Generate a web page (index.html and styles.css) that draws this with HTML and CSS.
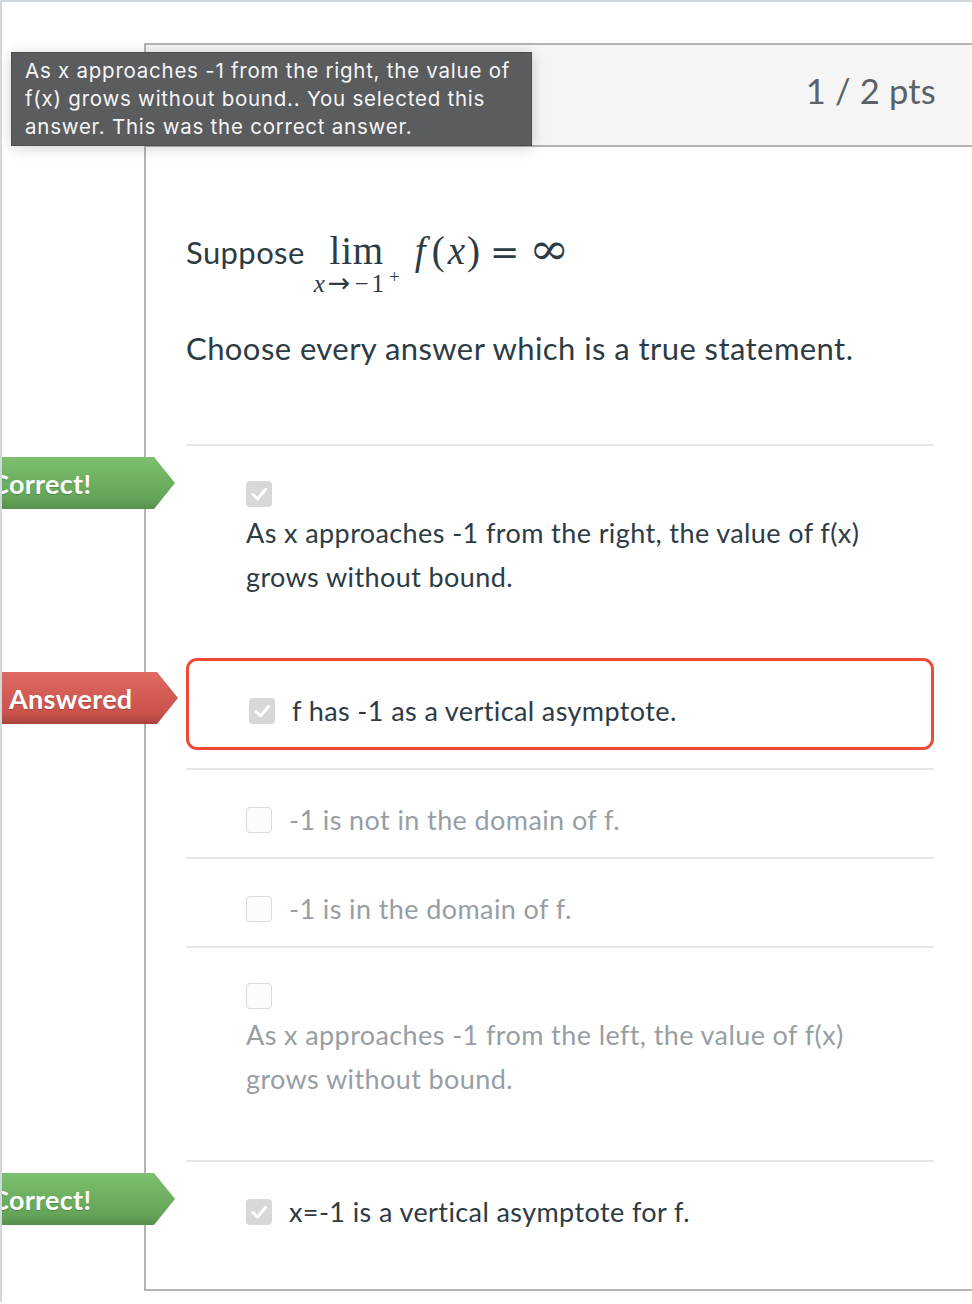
FILE: index.html
```html
<!DOCTYPE html>
<html>
<head>
<meta charset="utf-8">
<link rel="stylesheet" href="styles.css">
</head>
<body>
<div class="page">
  <div class="card">
    <div class="card-header">
      <span class="pts">1 / 2 pts</span>
    </div>
    <div class="card-body">
      <div class="q-math">
        <span class="q-word">Suppose</span>
        <span class="lim-col">
          <span class="lim">lim</span>
          <span class="lim-sub"><i>x</i><span class="arr">→</span><span class="neg">−</span><span class="one">1</span><sup>+</sup></span>
        </span>
        <span class="mexpr"><i class="mf">f</i><span class="par">(</span><i class="mx">x</i><span class="par">)</span><span class="eq">=</span><span class="inf">∞</span></span>
      </div>
      <p class="q-text">Choose every answer which is a true statement.</p>

      <div class="answer multi divided">
        <div class="banner banner-correct">Correct!</div>
        <span class="cb cb-checked"><svg viewBox="0 0 26 26" width="26" height="26"><polyline points="7,13.5 11.5,18 19.5,8.5" fill="none" stroke="#fff" stroke-width="3" stroke-linecap="round" stroke-linejoin="round"/></svg></span>
        <div class="a-text">As x approaches -1 from the right, the value of f(x) grows without bound.</div>
      </div>

      <div class="answer selected single">
        <div class="banner banner-answered">Answered</div>
        <span class="cb cb-checked"><svg viewBox="0 0 26 26" width="26" height="26"><polyline points="7,13.5 11.5,18 19.5,8.5" fill="none" stroke="#fff" stroke-width="3" stroke-linecap="round" stroke-linejoin="round"/></svg></span>
        <span class="a-text">f has -1 as a vertical asymptote.</span>
      </div>

      <div class="answer single divided muted">
        <span class="cb cb-empty"></span>
        <span class="a-text">-1 is not in the domain of f.</span>
      </div>

      <div class="answer single divided muted">
        <span class="cb cb-empty"></span>
        <span class="a-text">-1 is in the domain of f.</span>
      </div>

      <div class="answer multi divided muted">
        <span class="cb cb-empty"></span>
        <div class="a-text">As x approaches -1 from the left, the value of f(x) grows without bound.</div>
      </div>

      <div class="answer single divided">
        <div class="banner banner-correct">Correct!</div>
        <span class="cb cb-checked"><svg viewBox="0 0 26 26" width="26" height="26"><polyline points="7,13.5 11.5,18 19.5,8.5" fill="none" stroke="#fff" stroke-width="3" stroke-linecap="round" stroke-linejoin="round"/></svg></span>
        <span class="a-text">x=-1 is a vertical asymptote for f.</span>
      </div>
    </div>
  </div>

  <div class="tooltip">As x approaches -1 from the right, the value of<br>f(x) grows without bound.. You selected this<br>answer. This was the correct answer.</div>
</div>
</body>
</html>
```

FILE: styles.css
```css
html, body {
  margin: 0;
  padding: 0;
  background: #ffffff;
  overflow: hidden;
}

.page {
  position: relative;
  height: 1302px;
  border-top: 2px solid #d0d7dd;
  border-left: 2px solid #d0d7dd;
  padding-top: 41px;
  box-sizing: border-box;
  overflow: hidden;
  font-family: Lato, "Noto Sans", sans-serif;
  color: #2d3b45;
}

.card {
  margin-left: 142px;
  width: 832px;
  box-sizing: border-box;
  border: 2px solid #b4b4b4;
  background: #fff;
}

.card-header {
  height: 100px;
  background: #f5f5f5;
  border-bottom: 2px solid #b4b4b4;
  display: flex;
  align-items: center;
  justify-content: flex-end;
  padding: 0 38px 0 40px;
}

.pts {
  font-size: 34.5px;
  letter-spacing: 0.2px;
  color: #5b6168;
  margin-top: -10px;
}

.card-body {
  padding: 0 40px 40px 40px;
}

/* question */
.q-math {
  padding-top: 80px;
  height: 73px;
  display: flex;
  align-items: baseline;
  line-height: 44px;
}

.q-word {
  font-size: 31px;
  letter-spacing: 0.4px;
  margin-right: 9px;
}

.lim-col {
  display: inline-flex;
  flex-direction: column;
  align-items: center;
  font-family: "Liberation Serif", "DejaVu Serif", serif;
  margin-right: 11px;
}

.lim {
  font-size: 39px;
  letter-spacing: 0.8px;
  line-height: 44px;
}

.lim-sub {
  font-size: 25px;
  line-height: 20px;
  margin-top: 0;
  white-space: nowrap;
  display: flex;
  align-items: baseline;
}

.lim-sub .arr {
  font-family: "DejaVu Sans", sans-serif;
  font-size: 27px;
  margin: 0 3px 0 3px;
}

.lim-sub .neg {
  margin: 0 3px 0 1px;
}

.lim-sub sup {
  font-size: 19px;
  position: relative;
  top: -9px;
  margin-left: 5px;
  line-height: 0;
}

.mexpr {
  font-family: "Liberation Serif", "DejaVu Serif", serif;
  font-size: 39px;
  display: inline-flex;
  align-items: baseline;
}

.mexpr .mf {
  margin: 0 6px 0 4px;
}

.mexpr .mx {
  margin: 0 2px 0 3px;
}

.mexpr .eq {
  font-family: "DejaVu Serif", serif;
  font-size: 35px;
  margin: 0 10px 0 10px;
}

.mexpr .inf {
  font-family: "DejaVu Serif", serif;
  font-size: 44px;
  display: inline-block;
  transform: scaleX(1.1);
  transform-origin: left center;
}

.q-text {
  margin: 26px 0 74px 0;
  font-size: 31px;
  letter-spacing: 0.43px;
  line-height: 44px;
}

/* answers */
.answer {
  position: relative;
  font-size: 27px;
  letter-spacing: 0.4px;
  line-height: 44px;
}

.answer.divided {
  border-top: 2px solid #e6e6e6;
}

.answer.multi {
  padding: 35px 0 59px 60px;
}

.answer.multi .cb {
  display: block;
}

.answer.multi .a-text {
  margin-top: 4px;
  padding-right: 40px;
}

.answer.single {
  display: flex;
  align-items: center;
  gap: 17px;
  padding: 28px 0 15px 60px;
}

.answer.selected {
  border: 3px solid #ef4a36;
  border-radius: 11px;
  padding: 28px 0 14px 60px;
  margin-bottom: 18px;
}

.answer.muted .a-text {
  color: #979ea4;
}

.cb {
  width: 26px;
  height: 26px;
  box-sizing: border-box;
  border-radius: 4px;
  flex: none;
}

.cb svg {
  display: block;
}

.cb-checked {
  background: #d8d8d8;
}

.cb-empty {
  background: #fcfcfc;
  border: 1px solid #dadada;
}

/* banners */
.banner {
  position: absolute;
  top: 11px;
  height: 52px;
  line-height: 54px;
  color: #fff;
  font-size: 27px;
  font-weight: 700;
  letter-spacing: 0.3px;
  box-sizing: border-box;
  clip-path: polygon(0 0, calc(100% - 21px) 0, 100% 50%, calc(100% - 21px) 100%, 0 100%);
  text-shadow: 0 1px 1px rgba(0, 0, 0, 0.2);
  white-space: nowrap;
}

.banner-correct {
  left: -216px;
  width: 205px;
  padding-left: 21px;
  background: linear-gradient(#7cc06e, #64a458 80%, #578f4c);
}

.banner-answered {
  left: -219px;
  width: 208px;
  padding-left: 39px;
  background: linear-gradient(#df6a62, #c9524b 80%, #a9433d);
}

/* tooltip */
.tooltip {
  position: absolute;
  left: 9px;
  top: 50px;
  width: 521px;
  height: 94px;
  box-sizing: border-box;
  padding: 4px 0 0 13px;
  background: #5b5c5e;
  border: 1px solid #4c4d4f;
  color: #f5f5f5;
  font-family: Inter, "Liberation Sans", sans-serif;
  font-size: 20.5px;
  letter-spacing: 0.76px;
  line-height: 28px;
  box-shadow: 0 2px 14px rgba(0, 0, 0, 0.18);
  white-space: nowrap;
}
```
